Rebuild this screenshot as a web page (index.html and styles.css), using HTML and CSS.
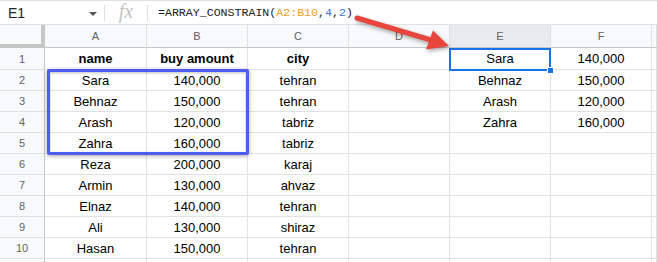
FILE: index.html
```html
<!DOCTYPE html>
<html lang="en">
<head>
  <meta charset="UTF-8" />
  <title>ARRAY_CONSTRAIN</title>
  <link rel="stylesheet" href="styles.css">
</head>
<body>
  <div class="page">
    <div class="formula-bar">
      <div class="name-box">E1</div>
      <span class="caret"></span>
      <span class="sep"></span>
      <span class="fx">fx</span>
      <span class="sep"></span>
      <div class="formula">=ARRAY_CONSTRAIN(<span class="ref">A2:B10</span>,<span class="arg">4</span>,<span class="arg">2</span>)</div>
    </div>

    <div class="sheet">
      <div class="corner"></div>
      <div class="col">A</div><div class="col">B</div><div class="col">C</div><div class="col">D</div><div class="col active">E</div><div class="col">F</div><div class="col edge"></div>

      <div class="num">1</div>
      <div class="cell bold">name</div><div class="cell bold">buy amount</div><div class="cell bold">city</div><div class="cell"></div><div class="cell">Sara</div><div class="cell">140,000</div><div class="cell edge"></div>

      <div class="num">2</div>
      <div class="cell">Sara</div><div class="cell">140,000</div><div class="cell">tehran</div><div class="cell"></div><div class="cell">Behnaz</div><div class="cell">150,000</div><div class="cell edge"></div>

      <div class="num">3</div>
      <div class="cell">Behnaz</div><div class="cell">150,000</div><div class="cell">tehran</div><div class="cell"></div><div class="cell">Arash</div><div class="cell">120,000</div><div class="cell edge"></div>

      <div class="num">4</div>
      <div class="cell">Arash</div><div class="cell">120,000</div><div class="cell">tabriz</div><div class="cell"></div><div class="cell">Zahra</div><div class="cell">160,000</div><div class="cell edge"></div>

      <div class="num">5</div>
      <div class="cell">Zahra</div><div class="cell">160,000</div><div class="cell">tabriz</div><div class="cell"></div><div class="cell"></div><div class="cell"></div><div class="cell edge"></div>

      <div class="num">6</div>
      <div class="cell">Reza</div><div class="cell">200,000</div><div class="cell">karaj</div><div class="cell"></div><div class="cell"></div><div class="cell"></div><div class="cell edge"></div>

      <div class="num">7</div>
      <div class="cell">Armin</div><div class="cell">130,000</div><div class="cell">ahvaz</div><div class="cell"></div><div class="cell"></div><div class="cell"></div><div class="cell edge"></div>

      <div class="num">8</div>
      <div class="cell">Elnaz</div><div class="cell">140,000</div><div class="cell">tehran</div><div class="cell"></div><div class="cell"></div><div class="cell"></div><div class="cell edge"></div>

      <div class="num">9</div>
      <div class="cell">Ali</div><div class="cell">130,000</div><div class="cell">shiraz</div><div class="cell"></div><div class="cell"></div><div class="cell"></div><div class="cell edge"></div>

      <div class="num">10</div>
      <div class="cell">Hasan</div><div class="cell">150,000</div><div class="cell">tehran</div><div class="cell"></div><div class="cell"></div><div class="cell"></div><div class="cell edge"></div>

      <div class="num"></div>
      <div class="cell"></div><div class="cell"></div><div class="cell"></div><div class="cell"></div><div class="cell"></div><div class="cell"></div><div class="cell edge"></div>
    </div>

    <!-- overlays -->
    <div class="highlight"></div>
    <div class="selection"><span class="handle"></span></div>
    <svg class="arrow" width="657" height="262" viewBox="0 0 657 262">
      <line x1="357" y1="18" x2="431" y2="40" stroke="#e8453c" stroke-width="5" stroke-linecap="round"/>
      <polygon points="449,46 426,49.5 433,30.5" fill="#e8453c"/>
    </svg>
  </div>
</body>
</html>
```

FILE: styles.css
```css
* {
  box-sizing: border-box;
}

body {
  margin: 0;
  background: #fff;
  font-family: 'Liberation Sans', Arial, sans-serif;
  overflow: hidden;
}

.page {
  position: relative;
  width: 657px;
  height: 262px;
  overflow: hidden;
}

.formula-bar {
  height: 25px;
  display: flex;
  align-items: center;
  border-top: 1px solid #e1e1e1;
  border-bottom: 1px solid #e1e1e1;
}

.name-box {
  font-size: 14px;
  color: #222;
  padding-left: 8px;
  width: 89px;
}

.caret {
  width: 0;
  height: 0;
  border-left: 4px solid transparent;
  border-right: 4px solid transparent;
  border-top: 4px solid #555;
  margin: 2px 7px 0 0;
}

.sep {
  width: 1px;
  height: 16px;
  background: #e0e0e0;
}

.fx {
  font-family: 'Liberation Serif', serif;
  font-style: italic;
  font-size: 20px;
  color: #c4c4c4;
  width: 42px;
  text-align: center;
  margin-top: -3px;
}

.formula {
  font-family: 'Liberation Mono', monospace;
  font-size: 11.6px;
  color: #222;
  padding-left: 10px;
}

.formula .ref {
  color: #f09f23;
}

.formula .arg {
  color: #3a78e0;
}

.sheet {
  display: grid;
  grid-template-columns: 45px 102px 101px 101px 101px 101px 101px 1fr;
  grid-template-rows: 23px 22px repeat(9, 21px) 21px;
}

.corner {
  background: #f8f9fa;
  border-right: 4px solid #c4c7c5;
  border-bottom: 4px solid #c4c7c5;
}

.col {
  background: #f8f9fa;
  border-right: 1px solid #e0e0e0;
  border-bottom: 1px solid #c4c7c5;
  font-size: 11px;
  color: #5f6368;
  display: flex;
  align-items: center;
  justify-content: center;
}

.col.active {
  background: #e8eaed;
}

.num {
  background: #f8f9fa;
  border-right: 1px solid #c4c7c5;
  border-bottom: 1px solid #e0e0e0;
  font-size: 11px;
  color: #5f6368;
  display: flex;
  align-items: center;
  justify-content: center;
}

.cell {
  border-right: 1px solid #e2e2e2;
  border-bottom: 1px solid #e2e2e2;
  font-size: 13px;
  color: #000;
  display: flex;
  align-items: center;
  justify-content: center;
}

.cell.bold {
  font-weight: bold;
}

.highlight {
  position: absolute;
  left: 47px;
  top: 69px;
  width: 202px;
  height: 86px;
  border: 3px solid #4b5ef0;
  border-radius: 2px;
  box-shadow: 0 1px 4px rgba(0, 0, 0, 0.35), inset 0 1px 3px rgba(0, 0, 0, 0.25);
}

.selection {
  position: absolute;
  left: 449px;
  top: 48px;
  width: 102px;
  height: 23px;
  border: 2px solid #1a73e8;
}

.handle {
  position: absolute;
  right: -5px;
  bottom: -5px;
  width: 7px;
  height: 7px;
  background: #1a73e8;
  border: 1px solid #fff;
}

.arrow {
  position: absolute;
  left: 0;
  top: 0;
  filter: drop-shadow(1px 2px 2px rgba(0, 0, 0, 0.35));
}
```
